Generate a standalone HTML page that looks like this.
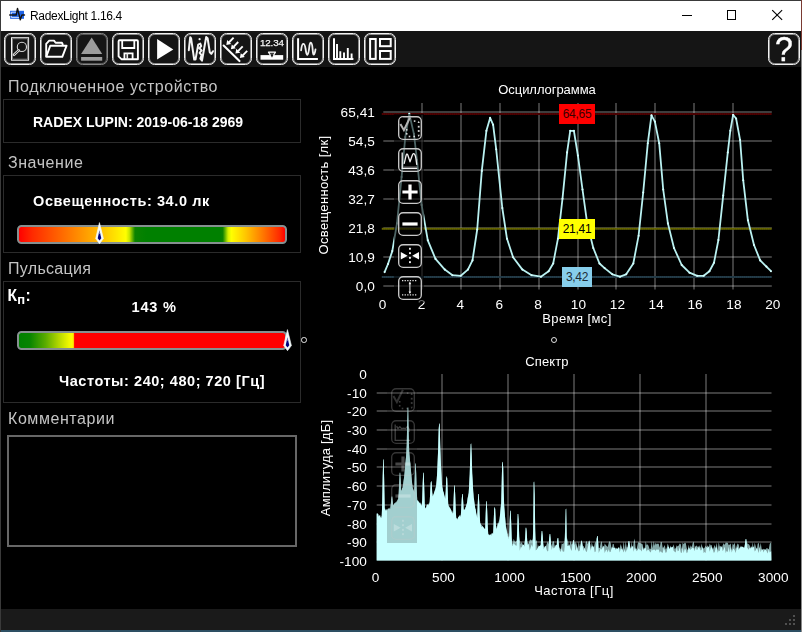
<!DOCTYPE html>
<html lang="ru">
<head>
<meta charset="utf-8">
<title>RadexLight 1.16.4</title>
<style>
html,body{margin:0;padding:0;}
body{width:802px;height:632px;overflow:hidden;background:#000;position:relative;font-family:"Liberation Sans",sans-serif;color:#fff;}
.abs{position:absolute;}
#win{position:absolute;left:0;top:0;width:802px;height:632px;background:#000;overflow:hidden;}
#titlebar{position:absolute;left:1px;top:1px;width:800px;height:30px;background:#fff;}
#title{position:absolute;left:30px;top:8.7px;font-size:12px;color:#000;letter-spacing:-0.32px;white-space:nowrap;line-height:14px;}
#toolbar{position:absolute;left:1px;top:31px;width:800px;height:36px;background:#151515;}
.tb{position:absolute;top:2px;width:30px;height:30px;border:1px solid #f2f2f2;border-radius:6.5px;box-shadow:inset 0 0 0 1px #8c8c8c;}
.tb svg{position:absolute;left:-1px;top:-1px;width:32px;height:32px;}
#status{position:absolute;left:1px;top:609px;width:800px;height:21px;background:#1a1a1a;}
#botstrip{position:absolute;left:0;top:630px;width:802px;height:2px;background:#2d4f63;}
.hd{position:absolute;left:8px;font-size:16px;letter-spacing:0.56px;color:#c4c4c4;white-space:nowrap;line-height:20px;}
.box{position:absolute;left:3px;width:296px;border:1px solid #2b2b2b;box-sizing:content-box;}
.bt{position:absolute;font-weight:700;color:#fff;white-space:nowrap;line-height:18px;}
.bar{position:absolute;left:17.2px;width:265.6px;height:15.1px;border:2px solid #869090;border-radius:4.5px;box-sizing:content-box;background-clip:padding-box;background-origin:padding-box;}
.tk{position:absolute;font-size:13.6px;color:#fff;white-space:nowrap;line-height:16px;letter-spacing:0.1px;}
.tk.r{text-align:right;}
.tk.c{text-align:center;}
.cl{position:absolute;font-size:13px;color:#fff;white-space:nowrap;line-height:16px;text-align:center;letter-spacing:0.1px;}
.mk{position:absolute;font-size:12px;line-height:20px;text-align:center;white-space:nowrap;letter-spacing:-0.3px;}
.cb{position:absolute;width:24px;height:24px;}
.cb svg{position:absolute;left:0;top:0;width:24px;height:24px;}
.hd,.bt,.tk,.cl,.mk,#title,.tb{will-change:opacity;}
</style>
</head>
<body>
<div id="win">
  <!-- title bar -->
  <div id="titlebar"></div>
  <svg class="abs" style="left:8px;top:6px" width="18" height="18" viewBox="0 0 18 18">
    <rect x="2.1" y="4.8" width="13.9" height="8" fill="#1f63e6"/>
    <path d="M3.3,11.4 L3.3,6.2 L8,6.2 M3.3,11.4 L12,11.4" fill="none" stroke="#e4edff" stroke-width="0.9"/>
    <polyline points="1.7,9 8.2,9 9.5,2.4 12.3,13.8 13.9,9 16.5,9" fill="none" stroke="#141414" stroke-width="1.4" stroke-linejoin="round" stroke-linecap="round"/>
  </svg>
  <div id="title">RadexLight 1.16.4</div>
  <svg class="abs" style="left:661px;top:1px" width="140" height="30" viewBox="0 0 141 30">
    <g stroke="#000" stroke-width="1" fill="none" shape-rendering="crispEdges">
      <line x1="21" y1="14.5" x2="31" y2="14.5"/>
      <rect x="66.5" y="9.5" width="9" height="9"/>
    </g>
    <g stroke="#000" stroke-width="1.1" fill="none">
      <line x1="112" y1="9" x2="122" y2="19"/><line x1="122" y1="9" x2="112" y2="19"/>
    </g>
  </svg>

  <!-- toolbar -->
  <div id="toolbar">
    <!--TBSTART-->
    <div class="tb" style="left:3px"><svg viewBox="0 0 32 32">
      <rect x="7.5" y="4.7" width="17.1" height="22.5" fill="none" stroke="#f2f2f2" stroke-width="1"/>
      <rect x="8.5" y="5.7" width="15.1" height="20.5" fill="none" stroke="#7d7d7d" stroke-width="1"/>
      <circle cx="17.9" cy="13.9" r="4.6" fill="none" stroke="#d8d8d8" stroke-width="1.1"/>
      <path d="M14.7,17.4 L10,21.8" stroke="#d8d8d8" stroke-width="2.6" stroke-linecap="round" fill="none"/>
      <path d="M14.5,17.6 L10.2,21.6" stroke="#151515" stroke-width="0.8" stroke-linecap="round" fill="none"/>
    </svg></div>
    <div class="tb" style="left:39px"><svg viewBox="0 0 32 32">
      <path d="M6.2,23.8 L6.2,10.8 L7.6,9.4 L9.2,7.6 L14,7.6 L15.6,9.8 L22,9.8 L23,12" fill="none" stroke="#fff" stroke-width="1.9" stroke-linejoin="round"/>
      <path d="M10.3,12.7 L26.6,12.7 L22.3,23.8 L6.2,23.8 Z" fill="none" stroke="#fff" stroke-width="1.9" stroke-linejoin="round"/>
    </svg></div>
    <div class="tb" style="left:75px;border-color:#8a8a8a;box-shadow:inset 0 0 0 1px #555"><svg viewBox="0 0 32 32">
      <path d="M15.7,4.5 L26.2,20.9 L5.1,20.9 Z" fill="#9c9c9c"/>
      <rect x="5.1" y="24" width="21.1" height="3.7" fill="#9c9c9c"/>
    </svg></div>
    <div class="tb" style="left:111px"><svg viewBox="0 0 32 32">
      <path d="M7.6,7.3 L25,7.3 Q25.9,7.3 25.9,8.2 L25.9,26.2 L9.4,26.2 L6.6,23.4 L6.6,8.2 Q6.6,7.3 7.6,7.3 Z" fill="none" stroke="#fff" stroke-width="1.9" stroke-linejoin="round"/>
      <path d="M10.2,7.3 L10.2,15 L22.3,15 L22.3,7.3" fill="none" stroke="#fff" stroke-width="1.8"/>
      <path d="M12.4,26.2 L12.4,20.4 L20.6,20.4 L20.6,26.2" fill="none" stroke="#fff" stroke-width="1.8"/>
      <path d="M15.3,20.4 L15.3,26.2" stroke="#e8e8e8" stroke-width="1.6"/>
    </svg></div>
    <div class="tb" style="left:147px"><svg viewBox="0 0 32 32">
      <path d="M9.1,6.1 L9.1,26.5 L25.3,16.4 Z" fill="#fff"/>
    </svg></div>
    <div class="tb" style="left:183px"><svg viewBox="0 0 32 32">
      <path d="M4.8,17.2 L6.2,4.2 L7.1,5.4 L10.2,26.6 L11.5,26.6 L14.2,11.6 L16.3,10.6 L17.2,13 L15.4,15.2 L17.6,17.4 L15.6,19.8 L17.6,22.2 L16.4,25.6 L18,27.6 L22.2,4 L23.6,5.2 L25.8,19.4 L27.3,20.9 L29,18.2" fill="none" stroke="#f4f4f4" stroke-width="2" stroke-linejoin="round" stroke-linecap="round"/>
      <circle cx="15.6" cy="6.2" r="1.1" fill="#f4f4f4"/>
    </svg></div>
    <div class="tb" style="left:219px"><svg viewBox="0 0 32 32">
      <path d="M3.6,12.5 L19.5,28.1" stroke="#fff" stroke-width="2.1" stroke-linecap="round" fill="none"/>
      <g id="arw"><path d="M13.6,4.7 L8.9,9.5" stroke="#fff" stroke-width="1.9" fill="none"/><path d="M6.3,11.9 L7.2,7.1 L11.2,11 Z" fill="#fff"/></g>
      <use href="#arw" x="4.6" y="4.3"/><use href="#arw" x="9.1" y="8.7"/><use href="#arw" x="13.6" y="13.1"/>
    </svg></div>
    <div class="tb" style="left:255px"><svg viewBox="0 0 32 32">
      <text x="15.9" y="13" font-family="Liberation Sans, sans-serif" font-size="9.8" font-weight="400" fill="#f4f4f4" stroke="#f4f4f4" stroke-width="0.25" text-anchor="middle" letter-spacing="-0.15">12.34</text>
      <rect x="4.5" y="22.1" width="22.7" height="4.6" fill="#fff"/>
      <path d="M12.4,19.1 L19.5,19.1 L16,24.8 Z" fill="#3a3a3a" stroke="#fff" stroke-width="1.1" stroke-linejoin="round"/>
      <path d="M14.6,22.1 L17.4,22.1 L16,24.6 Z" fill="#1a1a1a"/>
    </svg></div>
    <div class="tb" style="left:291px"><svg viewBox="0 0 32 32">
      <path d="M6.1,5.2 L6.1,26 L25.9,26" fill="none" stroke="#fff" stroke-width="2"/>
      <path d="M9.1,17.3 Q9.8,11 11.2,10.8 Q12.8,10.6 13.6,16 Q14.4,22 15.4,21.8 Q16.6,21 17.4,13 Q18,9.4 19,9.8 Q20.2,10.4 20.6,16 Q21,21.8 21.8,21.6 Q22.8,21 23.5,16.4" fill="none" stroke="#f0f0f0" stroke-width="1.8" stroke-linecap="round"/>
    </svg></div>
    <div class="tb" style="left:327px"><svg viewBox="0 0 32 32">
      <path d="M6,5.2 L6,26 L25.4,26" fill="none" stroke="#fff" stroke-width="2"/>
      <path d="M9,11 V26 M12.3,18.2 V26 M16,19.5 V26 M19.8,15.1 V26 M23.6,20.4 V26" stroke="#fff" stroke-width="1.9" fill="none"/>
    </svg></div>
    <div class="tb" style="left:363px"><svg viewBox="0 0 32 32">
      <rect x="6.1" y="6" width="5.6" height="19.9" fill="none" stroke="#fff" stroke-width="2"/>
      <rect x="16" y="6" width="10.7" height="7.2" fill="none" stroke="#fff" stroke-width="2"/>
      <rect x="16" y="18" width="10.7" height="7.9" fill="none" stroke="#fff" stroke-width="2"/>
    </svg></div>
    <div class="tb" style="left:767px"><div style="position:absolute;left:0;top:-3px;width:30px;text-align:center;font-size:32px;line-height:36px;color:#fff;transform:scaleY(1.1);-webkit-text-stroke:0.35px #fff">?</div></div>
    <!--TBEND-->
  </div>

  <!-- left panel -->
  <div class="hd" style="top:77px">Подключенное устройство</div>
  <div class="box" style="top:99px;height:42px"></div>
  <div class="bt" style="left:33px;top:113px;font-size:14px">RADEX LUPIN: 2019-06-18 2969</div>

  <div class="hd" style="top:153px">Значение</div>
  <div class="box" style="top:175px;height:76px"></div>
  <div class="bt" style="left:33px;top:192px;font-size:14.5px;letter-spacing:0.6px">Освещенность: 34.0 лк</div>
  <div class="bar" style="top:225px;background:linear-gradient(to right,#ff0000 0%,#ff2a00 5%,#ff7a00 19%,#ffb400 29%,#ffe800 37%,#ffff00 40.2%,#c8e600 41.5%,#0a8200 43.6%,#008000 48%,#008000 75.6%,#0a8200 76.6%,#d0f000 78.6%,#ffff00 79.8%,#ffc800 85%,#ff7a00 91.5%,#ff2a00 98%,#ff0000 100%)"></div>
  <svg class="abs" style="left:93.95px;top:221.2px" width="12" height="25" viewBox="0 0 12 25">
    <path d="M5.45,1.6 L9.4,17.6 L5.5,22.7 L1.7,17.6 Z" fill="#f4fbfb" stroke="#f4fbfb" stroke-width="0.6" stroke-linejoin="round"/><path d="M5.45,9.6 L7.3,17.2 L5.5,19.6 L3.7,17.2 Z" fill="#00007c"/><path d="M5.45,9 L6.4,13 L4.5,13 Z" fill="#8a96c8" opacity="0.7"/>
  </svg>

  <div class="hd" style="top:259px;letter-spacing:0.3px">Пульсация</div>
  <div class="box" style="top:281px;height:120px"></div>
  <div class="bt" style="left:7.4px;top:286.6px;font-size:15.6px;letter-spacing:0.3px">К<span style="font-size:13px;position:relative;top:3.2px">п</span>:</div>
  <div class="bt" style="left:131.6px;top:297.6px;font-size:14.6px;letter-spacing:0.75px">143 %</div>
  <div class="bar" style="top:331px;background:linear-gradient(to right,#008000 0%,#078400 4%,#5aac00 10%,#b4d800 15%,#f0f800 18.8%,#ffff00 20.0%,#ffd000 20.5%,#ff0000 20.9%,#ff0000 100%)"></div>
  <svg class="abs" style="left:281.55px;top:327.6px" width="12" height="25" viewBox="0 0 12 25">
    <path d="M5.45,1.6 L9.4,17.6 L5.5,22.7 L1.7,17.6 Z" fill="#f4fbfb" stroke="#f4fbfb" stroke-width="0.6" stroke-linejoin="round"/><path d="M5.45,9.6 L7.3,17.2 L5.5,19.6 L3.7,17.2 Z" fill="#00007c"/><path d="M5.45,9 L6.4,13 L4.5,13 Z" fill="#8a96c8" opacity="0.7"/>
  </svg>
  <div class="abs" style="left:301.1px;top:337.2px;width:3.6px;height:3.6px;border:1px solid #e6e6e6;border-radius:50%"></div>
  <div class="bt" style="left:59px;top:372px;font-size:14.5px;letter-spacing:0.55px">Частоты: 240; 480; 720 [Гц]</div>

  <div class="hd" style="top:409px">Комментарии</div>
  <div class="abs" style="left:7px;top:435px;width:286px;height:108px;border:2px solid #676767"></div>

  <!-- oscillogram -->
  <div class="cl" style="left:467px;top:82px;width:160px;letter-spacing:-0.05px">Осциллограмма</div>
  <svg class="abs" style="left:0;top:0" width="802" height="632" viewBox="0 0 802 632">
    <g stroke="#ffffff" stroke-opacity="0.245" stroke-width="2" fill="none"><line x1="422" y1="103" x2="422" y2="289.5"/><line x1="461" y1="103" x2="461" y2="289.5"/><line x1="500" y1="103" x2="500" y2="289.5"/><line x1="539" y1="103" x2="539" y2="289.5"/><line x1="578" y1="103" x2="578" y2="289.5"/><line x1="616" y1="103" x2="616" y2="289.5"/><line x1="655" y1="103" x2="655" y2="289.5"/><line x1="694" y1="103" x2="694" y2="289.5"/><line x1="733" y1="103" x2="733" y2="289.5"/><line x1="383.3" y1="286" x2="771.8" y2="286"/><line x1="383.3" y1="257" x2="771.8" y2="257"/><line x1="383.3" y1="228" x2="771.8" y2="228"/><line x1="383.3" y1="199" x2="771.8" y2="199"/><line x1="383.3" y1="170" x2="771.8" y2="170"/><line x1="383.3" y1="141" x2="771.8" y2="141"/><line x1="383.3" y1="112" x2="771.8" y2="112"/></g>
    <line x1="381.8" y1="114" x2="771.8" y2="114" stroke="#420000" stroke-width="2"/>
    <line x1="381.8" y1="114" x2="771.8" y2="114" stroke="#a00000" stroke-opacity="0.16" stroke-width="1.8" stroke-dasharray="1.1 0.9"/>
    <line x1="381.8" y1="228.8" x2="771.8" y2="228.8" stroke="#5e5e00" stroke-width="2"/>
    <line x1="381.8" y1="228.8" x2="771.8" y2="228.8" stroke="#a8a800" stroke-opacity="0.16" stroke-width="1.8" stroke-dasharray="1.1 0.9"/>
    <line x1="381.8" y1="276.9" x2="771.8" y2="276.9" stroke="#20343f" stroke-width="2"/>
    <line x1="381.8" y1="276.9" x2="771.8" y2="276.9" stroke="#3c7a98" stroke-opacity="0.16" stroke-width="1.8" stroke-dasharray="1.1 0.9"/>
    <polyline points="384.6,272.1 388.0,264.0 392.3,251.1 397.0,223.4 401.6,177.0 405.3,137.0 409.3,113.9 413.9,133.9 417.0,160.0 421.6,204.9 427.8,240.3 435.5,258.9 444.8,269.6 452.5,275.2 460.8,275.8 467.9,269.6 472.5,260.4 477.2,229.5 481.8,170.9 486.4,130.8 490.1,117.9 493.1,124.7 496.2,149.3 502.3,208.0 507.0,238.8 513.1,257.3 522.4,269.6 531.6,275.2 540.9,276.7 548.6,271.2 553.2,263.5 557.9,238.8 562.5,198.7 567.1,152.4 570.2,130.8 573.9,130.8 577.9,155.5 582.5,189.5 587.2,223.4 593.3,248.0 599.5,263.5 604.6,268.1 612.3,274.3 620.0,276.7 626.2,274.3 633.3,263.5 638.6,235.7 643.2,192.5 647.8,143.2 651.5,115.4 654.9,121.6 659.2,143.2 663.2,189.5 667.9,223.4 674.0,248.0 681.7,265.0 689.5,272.7 697.2,275.8 703.7,275.8 709.4,271.2 714.0,262.7 718.4,240.0 723.2,195.6 727.8,152.4 730.3,130.8 733.1,114.8 736.1,118.5 740.1,140.1 743.2,180.2 747.9,220.3 754.0,245.0 760.2,260.4 766.4,266.6 771.0,271.2" fill="none" stroke="#b9f1f1" stroke-width="1.8" stroke-linejoin="round"/>
    <g fill="#d6ffff"><circle cx="384.6" cy="272.1" r="1.05"/><circle cx="388.0" cy="264.0" r="1.05"/><circle cx="392.3" cy="251.1" r="1.05"/><circle cx="397.0" cy="223.4" r="1.05"/><circle cx="401.6" cy="177.0" r="1.05"/><circle cx="405.3" cy="137.0" r="1.05"/><circle cx="409.3" cy="113.9" r="1.05"/><circle cx="413.9" cy="133.9" r="1.05"/><circle cx="417.0" cy="160.0" r="1.05"/><circle cx="421.6" cy="204.9" r="1.05"/><circle cx="427.8" cy="240.3" r="1.05"/><circle cx="435.5" cy="258.9" r="1.05"/><circle cx="444.8" cy="269.6" r="1.05"/><circle cx="452.5" cy="275.2" r="1.05"/><circle cx="460.8" cy="275.8" r="1.05"/><circle cx="467.9" cy="269.6" r="1.05"/><circle cx="472.5" cy="260.4" r="1.05"/><circle cx="477.2" cy="229.5" r="1.05"/><circle cx="481.8" cy="170.9" r="1.05"/><circle cx="486.4" cy="130.8" r="1.05"/><circle cx="490.1" cy="117.9" r="1.05"/><circle cx="493.1" cy="124.7" r="1.05"/><circle cx="496.2" cy="149.3" r="1.05"/><circle cx="502.3" cy="208.0" r="1.05"/><circle cx="507.0" cy="238.8" r="1.05"/><circle cx="513.1" cy="257.3" r="1.05"/><circle cx="522.4" cy="269.6" r="1.05"/><circle cx="531.6" cy="275.2" r="1.05"/><circle cx="540.9" cy="276.7" r="1.05"/><circle cx="548.6" cy="271.2" r="1.05"/><circle cx="553.2" cy="263.5" r="1.05"/><circle cx="557.9" cy="238.8" r="1.05"/><circle cx="562.5" cy="198.7" r="1.05"/><circle cx="567.1" cy="152.4" r="1.05"/><circle cx="570.2" cy="130.8" r="1.05"/><circle cx="573.9" cy="130.8" r="1.05"/><circle cx="577.9" cy="155.5" r="1.05"/><circle cx="582.5" cy="189.5" r="1.05"/><circle cx="587.2" cy="223.4" r="1.05"/><circle cx="593.3" cy="248.0" r="1.05"/><circle cx="599.5" cy="263.5" r="1.05"/><circle cx="604.6" cy="268.1" r="1.05"/><circle cx="612.3" cy="274.3" r="1.05"/><circle cx="620.0" cy="276.7" r="1.05"/><circle cx="626.2" cy="274.3" r="1.05"/><circle cx="633.3" cy="263.5" r="1.05"/><circle cx="638.6" cy="235.7" r="1.05"/><circle cx="643.2" cy="192.5" r="1.05"/><circle cx="647.8" cy="143.2" r="1.05"/><circle cx="651.5" cy="115.4" r="1.05"/><circle cx="654.9" cy="121.6" r="1.05"/><circle cx="659.2" cy="143.2" r="1.05"/><circle cx="663.2" cy="189.5" r="1.05"/><circle cx="667.9" cy="223.4" r="1.05"/><circle cx="674.0" cy="248.0" r="1.05"/><circle cx="681.7" cy="265.0" r="1.05"/><circle cx="689.5" cy="272.7" r="1.05"/><circle cx="697.2" cy="275.8" r="1.05"/><circle cx="703.7" cy="275.8" r="1.05"/><circle cx="709.4" cy="271.2" r="1.05"/><circle cx="714.0" cy="262.7" r="1.05"/><circle cx="718.4" cy="240.0" r="1.05"/><circle cx="723.2" cy="195.6" r="1.05"/><circle cx="727.8" cy="152.4" r="1.05"/><circle cx="730.3" cy="130.8" r="1.05"/><circle cx="733.1" cy="114.8" r="1.05"/><circle cx="736.1" cy="118.5" r="1.05"/><circle cx="740.1" cy="140.1" r="1.05"/><circle cx="743.2" cy="180.2" r="1.05"/><circle cx="747.9" cy="220.3" r="1.05"/><circle cx="754.0" cy="245.0" r="1.05"/><circle cx="760.2" cy="260.4" r="1.05"/><circle cx="766.4" cy="266.6" r="1.05"/><circle cx="771.0" cy="271.2" r="1.05"/></g>
    <!-- spectrum -->
    <g stroke="#ffffff" stroke-opacity="0.245" stroke-width="2" fill="none"><line x1="442" y1="374" x2="442" y2="560.5"/><line x1="508" y1="374" x2="508" y2="560.5"/><line x1="574" y1="374" x2="574" y2="560.5"/><line x1="640" y1="374" x2="640" y2="560.5"/><line x1="706" y1="374" x2="706" y2="560.5"/><line x1="376.7" y1="393" x2="771.5" y2="393"/><line x1="376.7" y1="411" x2="771.5" y2="411"/><line x1="376.7" y1="430" x2="771.5" y2="430"/><line x1="376.7" y1="449" x2="771.5" y2="449"/><line x1="376.7" y1="467" x2="771.5" y2="467"/><line x1="376.7" y1="486" x2="771.5" y2="486"/><line x1="376.7" y1="505" x2="771.5" y2="505"/><line x1="376.7" y1="524" x2="771.5" y2="524"/><line x1="376.7" y1="542" x2="771.5" y2="542"/></g>
    <path d="M376.7,560.5 L376.7,514.0 L377.2,514.6 L377.7,516.1 L378.2,513.9 L378.7,517.0 L379.2,516.1 L379.7,516.6 L380.2,517.0 L380.7,517.7 L381.2,516.3 L381.7,516.6 L382.2,503.1 L382.7,475.9 L383.2,459.6 L383.7,459.6 L384.2,481.4 L384.7,508.5 L385.2,510.0 L385.7,510.6 L386.2,508.7 L386.7,510.7 L387.2,509.2 L387.7,509.2 L388.2,510.5 L388.7,507.7 L389.2,509.9 L389.7,509.6 L390.2,508.6 L390.7,505.2 L391.2,499.8 L391.7,496.6 L392.2,496.6 L392.7,500.9 L393.2,505.2 L393.7,505.4 L394.2,504.9 L394.7,504.8 L395.2,504.9 L395.7,502.3 L396.2,503.2 L396.7,501.0 L397.2,500.5 L397.7,499.4 L398.2,498.8 L398.7,492.9 L399.2,481.7 L399.7,472.8 L400.2,472.8 L400.7,479.5 L401.2,490.7 L401.7,490.2 L402.2,488.8 L402.7,487.5 L403.2,483.1 L403.7,480.1 L404.2,476.6 L404.7,471.3 L405.2,465.4 L405.7,460.1 L406.2,454.3 L406.7,444.9 L407.2,422.9 L407.7,407.4 L408.2,407.5 L408.7,434.2 L409.2,452.0 L409.7,457.2 L410.2,462.7 L410.7,468.2 L411.2,473.6 L411.7,478.9 L412.2,484.5 L412.7,487.4 L413.2,489.3 L413.7,490.4 L414.2,492.2 L414.7,476.2 L415.2,463.4 L415.7,463.4 L416.2,473.0 L416.7,489.1 L417.2,500.2 L417.7,500.2 L418.2,502.3 L418.7,502.9 L419.2,502.8 L419.7,502.5 L420.2,503.4 L420.7,504.4 L421.2,504.7 L421.7,505.8 L422.2,500.3 L422.7,483.1 L423.2,472.8 L423.7,472.8 L424.2,486.6 L424.7,503.8 L425.2,509.0 L425.7,507.6 L426.2,508.2 L426.7,506.1 L427.2,504.2 L427.7,504.8 L428.2,504.9 L428.7,505.4 L429.2,505.0 L429.7,502.7 L430.2,492.2 L430.7,482.7 L431.2,480.8 L431.7,482.7 L432.2,492.2 L432.7,496.2 L433.2,494.8 L433.7,494.1 L434.2,491.9 L434.7,491.5 L435.2,488.9 L435.7,488.3 L436.2,484.5 L436.7,479.1 L437.2,472.7 L437.7,460.1 L438.2,447.8 L438.7,428.3 L439.2,423.3 L439.7,424.1 L440.2,445.2 L440.7,458.4 L441.2,470.3 L441.7,479.4 L442.2,487.3 L442.7,489.3 L443.2,490.9 L443.7,493.4 L444.2,494.5 L444.7,497.2 L445.2,498.8 L445.7,491.7 L446.2,478.6 L446.7,476.0 L447.2,478.6 L447.7,491.7 L448.2,504.6 L448.7,506.9 L449.2,506.1 L449.7,509.3 L450.2,509.2 L450.7,508.5 L451.2,510.3 L451.7,511.7 L452.2,512.0 L452.7,513.5 L453.2,512.6 L453.7,497.6 L454.2,485.5 L454.7,485.5 L455.2,494.6 L455.7,509.6 L456.2,517.9 L456.7,519.5 L457.2,519.7 L457.7,518.8 L458.2,517.8 L458.7,516.6 L459.2,515.6 L459.7,518.1 L460.2,517.0 L460.7,517.0 L461.2,509.5 L461.7,499.8 L462.2,494.0 L462.7,494.0 L463.2,501.7 L463.7,510.1 L464.2,509.4 L464.7,509.9 L465.2,507.2 L465.7,507.2 L466.2,505.4 L466.7,504.0 L467.2,501.4 L467.7,497.8 L468.2,495.1 L468.7,493.1 L469.2,484.0 L469.7,474.8 L470.2,457.8 L470.7,444.3 L471.2,443.3 L471.7,455.9 L472.2,473.2 L472.7,482.4 L473.2,491.2 L473.7,497.6 L474.2,502.0 L474.7,504.9 L475.2,507.6 L475.7,511.4 L476.2,512.7 L476.7,514.9 L477.2,518.1 L477.7,504.7 L478.2,494.0 L478.7,494.0 L479.2,502.0 L479.7,515.4 L480.2,523.7 L480.7,524.7 L481.2,524.8 L481.7,524.7 L482.2,525.6 L482.7,527.9 L483.2,528.8 L483.7,528.4 L484.2,527.9 L484.7,530.8 L485.2,528.9 L485.7,513.6 L486.2,501.3 L486.7,501.3 L487.2,510.5 L487.7,525.8 L488.2,534.0 L488.7,534.9 L489.2,534.3 L489.7,534.9 L490.2,534.6 L490.7,535.8 L491.2,534.2 L491.7,534.3 L492.2,533.3 L492.7,533.2 L493.2,531.5 L493.7,521.3 L494.2,509.1 L494.7,506.7 L495.2,509.1 L495.7,521.3 L496.2,528.9 L496.7,525.9 L497.2,526.3 L497.7,524.5 L498.2,524.1 L498.7,521.5 L499.2,520.5 L499.7,519.0 L500.2,514.1 L500.7,508.4 L501.2,504.1 L501.7,482.1 L502.2,462.1 L502.7,461.7 L503.2,467.5 L503.7,493.0 L504.2,507.7 L504.7,514.3 L505.2,518.1 L505.7,523.5 L506.2,526.7 L506.7,529.3 L507.2,531.6 L507.7,534.2 L508.2,532.9 L508.7,537.0 L509.2,535.9 L509.7,520.2 L510.2,510.8 L510.7,510.8 L511.2,523.3 L511.7,537.6 L512.2,540.9 L512.7,544.3 L513.2,541.5 L513.7,538.7 L514.2,540.1 L514.7,541.5 L515.2,541.7 L515.7,541.7 L516.2,541.2 L516.7,540.6 L517.2,530.0 L517.7,514.0 L518.2,514.0 L518.7,520.4 L519.2,536.4 L519.7,539.8 L520.2,541.9 L520.7,544.1 L521.2,543.0 L521.7,541.9 L522.2,543.3 L522.7,544.7 L523.2,545.1 L523.7,545.5 L524.2,543.1 L524.7,540.7 L525.2,537.3 L525.7,527.7 L526.2,527.7 L526.7,531.5 L527.2,541.1 L527.7,543.4 L528.2,543.4 L528.7,543.4 L529.2,541.7 L529.7,540.0 L530.2,539.8 L530.7,539.5 L531.2,540.0 L531.7,540.5 L532.2,539.8 L532.7,539.2 L533.2,529.9 L533.7,482.4 L534.2,481.9 L534.7,495.2 L535.2,531.1 L535.7,542.0 L536.2,540.9 L536.7,539.8 L537.2,543.9 L537.7,548.0 L538.2,547.2 L538.7,546.4 L539.2,547.2 L539.7,548.1 L540.2,548.0 L540.7,545.0 L541.2,537.2 L541.7,531.0 L542.2,531.0 L542.7,535.7 L543.2,543.4 L543.7,546.3 L544.2,547.0 L544.7,547.7 L545.2,547.3 L545.7,547.0 L546.2,545.5 L546.7,544.1 L547.2,542.7 L547.7,541.4 L548.2,542.8 L548.7,544.3 L549.2,538.0 L549.7,534.0 L550.2,534.0 L550.7,539.3 L551.2,543.7 L551.7,546.2 L552.2,543.8 L552.7,541.4 L553.2,541.2 L553.7,541.0 L554.2,543.5 L554.7,546.0 L555.2,547.2 L555.7,548.4 L556.2,547.0 L556.7,544.9 L557.2,540.0 L557.7,538.0 L558.2,538.0 L558.7,542.9 L559.2,547.2 L559.7,547.9 L560.2,548.8 L560.7,549.6 L561.2,546.5 L561.7,543.4 L562.2,543.7 L562.7,544.0 L563.2,543.6 L563.7,543.2 L564.2,542.5 L564.7,537.0 L565.2,528.6 L565.7,509.3 L566.2,508.7 L566.7,536.1 L567.2,541.8 L567.7,538.0 L568.2,541.7 L568.7,545.3 L569.2,544.9 L569.7,544.4 L570.2,542.6 L570.7,540.8 L571.2,542.8 L571.7,544.8 L572.2,543.9 L572.7,542.9 L573.2,540.0 L573.7,540.0 L574.2,542.2 L574.7,545.3 L575.2,543.5 L575.7,541.7 L576.2,543.0 L576.7,544.4 L577.2,546.6 L577.7,548.8 L578.2,545.1 L578.7,541.4 L579.2,543.7 L579.7,546.0 L580.2,546.8 L580.7,543.7 L581.2,541.0 L581.7,539.7 L582.2,542.6 L582.7,545.5 L583.2,545.9 L583.7,546.3 L584.2,547.7 L584.7,549.1 L585.2,545.9 L585.7,542.6 L586.2,541.7 L586.7,540.7 L587.2,542.5 L587.7,544.2 L588.2,542.6 L588.7,541.0 L589.2,540.8 L589.7,540.6 L590.2,544.8 L590.7,549.4 L591.2,545.9 L591.7,542.4 L592.2,543.9 L592.7,545.4 L593.2,546.9 L593.7,548.4 L594.2,546.0 L594.7,543.6 L595.2,542.4 L595.7,541.2 L596.2,544.7 L596.7,538.5 L597.2,536.0 L597.7,536.0 L598.2,542.2 L598.7,547.9 L599.2,547.9 L599.7,547.9 L600.2,545.5 L600.7,543.0 L601.2,542.1 L601.7,541.1 L602.2,544.6 L602.7,548.0 L603.2,548.5 L603.7,548.9 L604.2,546.2 L604.7,543.4 L605.2,544.3 L605.7,545.1 L606.2,545.5 L606.7,545.9 L607.2,546.5 L607.7,547.0 L608.2,545.0 L608.7,543.0 L609.2,542.0 L609.7,541.1 L610.2,542.1 L610.7,543.2 L611.2,546.5 L611.7,549.9 L612.2,547.0 L612.7,544.0 L613.2,544.1 L613.7,544.1 L614.2,546.8 L614.7,549.6 L615.2,548.5 L615.7,547.5 L616.2,548.9 L616.7,550.3 L617.2,549.6 L617.7,548.9 L618.2,549.0 L618.7,549.1 L619.2,548.5 L619.7,547.8 L620.2,545.9 L620.7,543.9 L621.2,545.4 L621.7,546.9 L622.2,548.2 L622.7,549.6 L623.2,545.4 L623.7,541.2 L624.2,545.5 L624.7,549.8 L625.2,545.5 L625.7,541.2 L626.2,544.4 L626.7,547.6 L627.2,547.6 L627.7,547.1 L628.2,543.3 L628.7,541.0 L629.2,541.0 L629.7,544.0 L630.2,546.6 L630.7,548.8 L631.2,545.2 L631.7,541.6 L632.2,545.7 L632.7,549.7 L633.2,545.9 L633.7,542.0 L634.2,540.3 L634.7,538.5 L635.2,543.6 L635.7,548.7 L636.2,548.8 L636.7,548.8 L637.2,546.3 L637.7,543.7 L638.2,542.8 L638.7,541.9 L639.2,542.5 L639.7,543.0 L640.2,543.1 L640.7,543.3 L641.2,543.5 L641.7,543.7 L642.2,544.1 L642.7,544.5 L643.2,547.4 L643.7,550.2 L644.2,549.7 L644.7,549.1 L645.2,545.2 L645.7,541.3 L646.2,543.3 L646.7,545.2 L647.2,544.8 L647.7,544.3 L648.2,545.2 L648.7,546.2 L649.2,547.7 L649.7,549.2 L650.2,549.0 L650.7,548.8 L651.2,545.0 L651.7,541.1 L652.2,544.7 L652.7,548.3 L653.2,544.7 L653.7,541.1 L654.2,543.4 L654.7,545.7 L655.2,544.3 L655.7,542.8 L656.2,543.6 L656.7,544.4 L657.2,544.0 L657.7,543.5 L658.2,543.7 L658.7,543.8 L659.2,545.7 L659.7,547.7 L660.2,544.9 L660.7,542.1 L661.2,542.0 L661.7,541.8 L662.2,544.8 L662.7,547.7 L663.2,547.4 L663.7,547.1 L664.2,546.0 L664.7,544.9 L665.2,547.2 L665.7,549.6 L666.2,548.7 L666.7,547.9 L667.2,545.8 L667.7,543.6 L668.2,544.7 L668.7,545.9 L669.2,547.7 L669.7,549.5 L670.2,547.5 L670.7,545.5 L671.2,546.9 L671.7,548.3 L672.2,547.8 L672.7,547.3 L673.2,545.7 L673.7,544.2 L674.2,546.7 L674.7,549.1 L675.2,548.6 L675.7,548.2 L676.2,546.7 L676.7,545.3 L677.2,546.0 L677.7,546.6 L678.2,546.1 L678.7,545.5 L679.2,544.5 L679.7,543.4 L680.2,543.7 L680.7,544.0 L681.2,546.6 L681.7,549.2 L682.2,545.9 L682.7,542.6 L683.2,543.4 L683.7,544.2 L684.2,543.5 L684.7,542.7 L685.2,542.8 L685.7,542.9 L686.2,545.5 L686.7,548.1 L687.2,549.2 L687.7,550.3 L688.2,547.6 L688.7,544.8 L689.2,546.8 L689.7,548.7 L690.2,547.0 L690.7,545.3 L691.2,546.3 L691.7,547.2 L692.2,545.2 L692.7,543.1 L693.2,542.3 L693.7,541.5 L694.2,545.1 L694.7,548.7 L695.2,547.3 L695.7,545.9 L696.2,545.8 L696.7,545.6 L697.2,546.3 L697.7,546.9 L698.2,547.6 L698.7,548.2 L699.2,546.8 L699.7,545.3 L700.2,546.8 L700.7,548.3 L701.2,545.8 L701.7,543.4 L702.2,546.5 L702.7,549.6 L703.2,548.7 L703.7,547.9 L704.2,547.8 L704.7,547.7 L705.2,546.6 L705.7,545.5 L706.2,546.4 L706.7,547.2 L707.2,546.2 L707.7,545.2 L708.2,546.6 L708.7,548.0 L709.2,545.8 L709.7,543.6 L710.2,544.6 L710.7,545.5 L711.2,545.3 L711.7,545.1 L712.2,547.6 L712.7,550.1 L713.2,548.8 L713.7,547.4 L714.2,546.2 L714.7,544.9 L715.2,546.4 L715.7,547.9 L716.2,545.3 L716.7,542.8 L717.2,546.5 L717.7,550.2 L718.2,546.2 L718.7,542.2 L719.2,544.3 L719.7,546.4 L720.2,546.3 L720.7,546.1 L721.2,547.6 L721.7,549.1 L722.2,547.1 L722.7,545.2 L723.2,544.2 L723.7,543.3 L724.2,544.1 L724.7,545.0 L725.2,543.7 L725.7,542.4 L726.2,542.6 L726.7,542.8 L727.2,542.8 L727.7,542.8 L728.2,544.0 L728.7,545.3 L729.2,544.9 L729.7,544.6 L730.2,544.0 L730.7,543.4 L731.2,546.8 L731.7,550.2 L732.2,546.8 L732.7,543.4 L733.2,544.2 L733.7,545.0 L734.2,543.8 L734.7,542.5 L735.2,545.8 L735.7,549.0 L736.2,547.4 L736.7,545.8 L737.2,544.6 L737.7,543.4 L738.2,544.1 L738.7,544.7 L739.2,546.9 L739.7,549.1 L740.2,547.4 L740.7,545.8 L741.2,546.1 L741.7,546.5 L742.2,547.9 L742.7,549.2 L743.2,549.3 L743.7,549.4 L744.2,547.1 L744.7,544.9 L745.2,542.0 L745.7,539.0 L746.2,539.0 L746.7,541.4 L747.2,542.7 L747.7,544.0 L748.2,544.1 L748.7,544.2 L749.2,544.8 L749.7,545.4 L750.2,546.5 L750.7,547.6 L751.2,548.9 L751.7,550.2 L752.2,546.0 L752.7,541.9 L753.2,545.9 L753.7,550.0 L754.2,546.3 L754.7,542.7 L755.2,544.5 L755.7,546.3 L756.2,548.4 L756.7,550.4 L757.2,547.1 L757.7,543.7 L758.2,543.2 L758.7,542.7 L759.2,545.7 L759.7,548.7 L760.2,545.8 L760.7,542.8 L761.2,545.9 L761.7,548.9 L762.2,549.4 L762.7,549.8 L763.2,549.3 L763.7,548.8 L764.2,549.3 L764.7,549.9 L765.2,549.6 L765.7,549.4 L766.2,548.7 L766.7,548.0 L767.2,548.2 L767.7,548.4 L768.2,549.1 L768.7,549.8 L769.2,546.8 L769.7,543.9 L770.2,543.3 L770.7,542.7 L771.2,542.3 L771.4,560.5 Z" fill="#c8ffff" fill-opacity="0.66" stroke="none"/>
    <path d="M376.7,560.5 L376.7,513.5 L377.2,513.1 L377.7,513.8 L378.2,514.1 L378.7,516.7 L379.2,515.5 L379.7,515.3 L380.2,515.2 L380.7,517.7 L381.2,517.9 L381.7,517.4 L382.2,503.1 L382.7,475.9 L383.2,459.6 L383.7,459.6 L384.2,481.4 L384.7,508.5 L385.2,508.7 L385.7,510.7 L386.2,510.7 L386.7,509.4 L387.2,508.4 L387.7,510.7 L388.2,508.6 L388.7,508.7 L389.2,507.6 L389.7,508.8 L390.2,509.0 L390.7,505.2 L391.2,499.8 L391.7,496.6 L392.2,496.6 L392.7,500.9 L393.2,504.8 L393.7,505.3 L394.2,503.6 L394.7,503.1 L395.2,503.2 L395.7,502.1 L396.2,502.4 L396.7,501.4 L397.2,501.3 L397.7,499.8 L398.2,499.0 L398.7,492.9 L399.2,481.7 L399.7,472.8 L400.2,472.8 L400.7,479.5 L401.2,490.7 L401.7,490.3 L402.2,488.1 L402.7,487.6 L403.2,484.1 L403.7,480.0 L404.2,476.4 L404.7,471.6 L405.2,465.5 L405.7,460.4 L406.2,454.9 L406.7,445.7 L407.2,422.8 L407.7,407.7 L408.2,407.4 L408.7,434.3 L409.2,451.8 L409.7,457.3 L410.2,462.3 L410.7,467.5 L411.2,473.0 L411.7,478.7 L412.2,483.8 L412.7,488.1 L413.2,489.2 L413.7,490.6 L414.2,492.0 L414.7,476.2 L415.2,463.4 L415.7,463.4 L416.2,473.0 L416.7,489.1 L417.2,500.0 L417.7,500.8 L418.2,501.8 L418.7,500.6 L419.2,503.4 L419.7,502.5 L420.2,502.6 L420.7,503.9 L421.2,506.1 L421.7,505.1 L422.2,500.3 L422.7,483.1 L423.2,472.8 L423.7,472.8 L424.2,486.6 L424.7,503.8 L425.2,508.8 L425.7,507.8 L426.2,507.3 L426.7,504.9 L427.2,504.6 L427.7,504.4 L428.2,505.4 L428.7,503.4 L429.2,503.7 L429.7,501.2 L430.2,492.2 L430.7,482.7 L431.2,480.8 L431.7,482.7 L432.2,492.2 L432.7,496.5 L433.2,495.4 L433.7,493.9 L434.2,492.4 L434.7,490.4 L435.2,489.9 L435.7,487.5 L436.2,485.5 L436.7,480.2 L437.2,471.8 L437.7,460.4 L438.2,447.9 L438.7,429.3 L439.2,423.7 L439.7,423.5 L440.2,444.6 L440.7,458.5 L441.2,469.7 L441.7,480.0 L442.2,486.8 L442.7,489.1 L443.2,491.5 L443.7,492.4 L444.2,495.2 L444.7,496.7 L445.2,499.0 L445.7,491.7 L446.2,478.6 L446.7,476.0 L447.2,478.6 L447.7,491.7 L448.2,503.6 L448.7,506.1 L449.2,507.0 L449.7,507.6 L450.2,508.1 L450.7,509.5 L451.2,510.1 L451.7,512.6 L452.2,510.6 L452.7,513.8 L453.2,512.7 L453.7,497.6 L454.2,485.5 L454.7,485.5 L455.2,494.6 L455.7,509.6 L456.2,517.8 L456.7,518.2 L457.2,519.8 L457.7,518.2 L458.2,517.2 L458.7,517.0 L459.2,516.2 L459.7,515.2 L460.2,515.0 L460.7,517.1 L461.2,509.5 L461.7,499.8 L462.2,494.0 L462.7,494.0 L463.2,501.7 L463.7,509.7 L464.2,509.3 L464.7,510.1 L465.2,508.9 L465.7,507.6 L466.2,505.5 L466.7,504.1 L467.2,501.8 L467.7,498.1 L468.2,496.0 L468.7,492.9 L469.2,484.3 L469.7,474.7 L470.2,457.7 L470.7,444.0 L471.2,443.5 L471.7,454.9 L472.2,473.3 L472.7,481.5 L473.2,491.1 L473.7,497.6 L474.2,500.3 L474.7,504.7 L475.2,508.6 L475.7,509.3 L476.2,513.7 L476.7,515.6 L477.2,518.1 L477.7,504.7 L478.2,494.0 L478.7,494.0 L479.2,502.0 L479.7,515.4 L480.2,523.4 L480.7,523.2 L481.2,526.2 L481.7,527.2 L482.2,526.2 L482.7,526.0 L483.2,526.9 L483.7,527.3 L484.2,528.7 L484.7,528.5 L485.2,528.9 L485.7,513.6 L486.2,501.3 L486.7,501.3 L487.2,510.5 L487.7,525.8 L488.2,533.8 L488.7,534.7 L489.2,534.9 L489.7,535.4 L490.2,534.2 L490.7,534.4 L491.2,536.1 L491.7,532.9 L492.2,533.7 L492.7,533.6 L493.2,533.8 L493.7,521.3 L494.2,509.1 L494.7,506.7 L495.2,509.1 L495.7,521.3 L496.2,529.5 L496.7,528.1 L497.2,527.2 L497.7,523.5 L498.2,522.5 L498.7,523.7 L499.2,523.3 L499.7,517.4 L500.2,513.2 L500.7,506.8 L501.2,503.6 L501.7,482.9 L502.2,462.2 L502.7,462.2 L503.2,467.5 L503.7,492.4 L504.2,505.4 L504.7,511.7 L505.2,519.0 L505.7,525.6 L506.2,529.1 L506.7,531.0 L507.2,533.4 L507.7,536.4 L508.2,536.4 L508.7,538.9 L509.2,535.9 L509.7,520.2 L510.2,510.8 L510.7,510.8 L511.2,523.3 L511.7,539.0 L512.2,546.2 L512.7,545.6 L513.2,544.2 L513.7,542.9 L514.2,543.6 L514.7,544.4 L515.2,545.0 L515.7,545.5 L516.2,545.6 L516.7,545.7 L517.2,530.0 L517.7,514.0 L518.2,514.0 L518.7,520.4 L519.2,536.4 L519.7,550.8 L520.2,549.0 L520.7,547.1 L521.2,547.2 L521.7,547.4 L522.2,546.0 L522.7,544.6 L523.2,544.7 L523.7,544.8 L524.2,545.8 L524.7,546.7 L525.2,537.3 L525.7,527.7 L526.2,527.7 L526.7,531.5 L527.2,541.1 L527.7,545.0 L528.2,544.4 L528.7,543.9 L529.2,547.2 L529.7,550.6 L530.2,549.0 L530.7,547.4 L531.2,545.9 L531.7,544.4 L532.2,545.8 L532.7,547.2 L533.2,529.6 L533.7,482.1 L534.2,481.4 L534.7,495.0 L535.2,528.9 L535.7,550.4 L536.2,550.1 L536.7,549.7 L537.2,549.1 L537.7,548.5 L538.2,547.0 L538.7,545.4 L539.2,545.8 L539.7,546.2 L540.2,545.6 L540.7,544.9 L541.2,537.2 L541.7,531.0 L542.2,531.0 L542.7,535.7 L543.2,543.4 L543.7,549.6 L544.2,548.0 L544.7,546.4 L545.2,546.0 L545.7,545.7 L546.2,547.9 L546.7,550.1 L547.2,550.8 L547.7,551.5 L548.2,551.0 L548.7,544.6 L549.2,538.0 L549.7,534.0 L550.2,534.0 L550.7,539.3 L551.2,545.9 L551.7,550.0 L552.2,548.2 L552.7,546.3 L553.2,547.4 L553.7,548.5 L554.2,548.0 L554.7,547.4 L555.2,546.3 L555.7,545.1 L556.2,545.1 L556.7,544.9 L557.2,540.0 L557.7,538.0 L558.2,538.0 L558.7,542.9 L559.2,548.7 L559.7,550.3 L560.2,551.2 L560.7,552.0 L561.2,550.1 L561.7,548.1 L562.2,549.8 L562.7,551.5 L563.2,551.6 L563.7,551.7 L564.2,551.4 L564.7,546.4 L565.2,531.3 L565.7,509.5 L566.2,508.4 L566.7,536.1 L567.2,545.9 L567.7,545.9 L568.2,545.8 L568.7,545.7 L569.2,545.8 L569.7,545.8 L570.2,547.4 L570.7,549.0 L571.2,550.0 L571.7,551.1 L572.2,546.6 L572.7,542.9 L573.2,540.0 L573.7,540.0 L574.2,542.2 L574.7,545.8 L575.2,549.9 L575.7,550.5 L576.2,547.9 L576.7,545.3 L577.2,547.4 L577.7,549.6 L578.2,550.5 L578.7,551.5 L579.2,551.0 L579.7,550.6 L580.2,547.0 L580.7,543.7 L581.2,541.0 L581.7,541.0 L582.2,543.0 L582.7,546.2 L583.2,548.5 L583.7,550.8 L584.2,549.1 L584.7,547.5 L585.2,549.2 L585.7,551.0 L586.2,551.6 L586.7,552.3 L587.2,550.2 L587.7,548.1 L588.2,546.1 L588.7,542.8 L589.2,541.5 L589.7,541.5 L590.2,544.8 L590.7,550.7 L591.2,548.6 L591.7,546.6 L592.2,546.5 L592.7,546.3 L593.2,546.4 L593.7,546.5 L594.2,549.4 L594.7,552.2 L595.2,551.8 L595.7,551.5 L596.2,544.7 L596.7,538.5 L597.2,536.0 L597.7,536.0 L598.2,542.2 L598.7,552.9 L599.2,551.7 L599.7,550.6 L600.2,549.4 L600.7,548.3 L601.2,549.0 L601.7,549.8 L602.2,548.2 L602.7,546.7 L603.2,546.2 L603.7,545.8 L604.2,549.4 L604.7,552.9 L605.2,551.7 L605.7,550.5 L606.2,550.1 L606.7,549.6 L607.2,551.1 L607.7,552.6 L608.2,550.8 L608.7,548.9 L609.2,550.6 L609.7,552.2 L610.2,552.0 L610.7,551.8 L611.2,549.6 L611.7,547.3 L612.2,547.4 L612.7,547.6 L613.2,547.8 L613.7,547.9 L614.2,547.7 L614.7,547.5 L615.2,548.8 L615.7,550.1 L616.2,548.9 L616.7,547.7 L617.2,548.3 L617.7,548.9 L618.2,547.8 L618.7,546.7 L619.2,549.6 L619.7,552.5 L620.2,550.4 L620.7,548.4 L621.2,548.8 L621.7,549.2 L622.2,549.6 L622.7,550.1 L623.2,551.3 L623.7,552.5 L624.2,550.7 L624.7,548.9 L625.2,550.7 L625.7,552.6 L626.2,551.0 L626.7,549.5 L627.2,549.6 L627.7,547.1 L628.2,543.3 L628.7,541.0 L629.2,541.0 L629.7,544.0 L630.2,547.5 L630.7,549.0 L631.2,548.1 L631.7,547.1 L632.2,546.5 L632.7,545.8 L633.2,548.8 L633.7,551.7 L634.2,549.4 L634.7,547.1 L635.2,548.2 L635.7,549.3 L636.2,550.2 L636.7,551.2 L637.2,550.6 L637.7,549.9 L638.2,549.1 L638.7,548.2 L639.2,548.9 L639.7,549.7 L640.2,549.8 L640.7,549.9 L641.2,550.8 L641.7,551.6 L642.2,549.1 L642.7,546.6 L643.2,548.3 L643.7,550.0 L644.2,548.8 L644.7,547.7 L645.2,547.8 L645.7,547.9 L646.2,549.7 L646.7,551.6 L647.2,550.6 L647.7,549.6 L648.2,549.8 L648.7,550.0 L649.2,550.7 L649.7,551.5 L650.2,552.0 L650.7,552.6 L651.2,550.9 L651.7,549.1 L652.2,549.8 L652.7,550.4 L653.2,550.0 L653.7,549.6 L654.2,549.6 L654.7,549.7 L655.2,550.3 L655.7,551.0 L656.2,550.1 L656.7,549.2 L657.2,549.5 L657.7,549.8 L658.2,549.6 L658.7,549.4 L659.2,551.1 L659.7,552.8 L660.2,551.9 L660.7,551.1 L661.2,551.7 L661.7,552.4 L662.2,552.6 L662.7,552.9 L663.2,550.3 L663.7,547.8 L664.2,548.9 L664.7,550.0 L665.2,551.5 L665.7,552.9 L666.2,552.5 L666.7,552.1 L667.2,549.5 L667.7,546.9 L668.2,546.9 L668.7,546.8 L669.2,548.0 L669.7,549.2 L670.2,547.8 L670.7,546.4 L671.2,547.1 L671.7,547.7 L672.2,547.1 L672.7,546.5 L673.2,548.7 L673.7,550.9 L674.2,551.3 L674.7,551.7 L675.2,552.1 L675.7,552.6 L676.2,549.8 L676.7,547.1 L677.2,549.1 L677.7,551.2 L678.2,551.0 L678.7,550.8 L679.2,548.9 L679.7,547.0 L680.2,549.7 L680.7,552.5 L681.2,552.8 L681.7,553.1 L682.2,550.3 L682.7,547.6 L683.2,550.3 L683.7,553.0 L684.2,550.9 L684.7,548.9 L685.2,549.2 L685.7,549.6 L686.2,551.4 L686.7,553.3 L687.2,552.7 L687.7,552.1 L688.2,549.6 L688.7,547.2 L689.2,548.2 L689.7,549.2 L690.2,549.5 L690.7,549.8 L691.2,549.1 L691.7,548.5 L692.2,547.9 L692.7,547.4 L693.2,547.9 L693.7,548.3 L694.2,549.8 L694.7,551.3 L695.2,548.7 L695.7,546.1 L696.2,548.1 L696.7,550.1 L697.2,549.7 L697.7,549.2 L698.2,547.7 L698.7,546.1 L699.2,547.3 L699.7,548.4 L700.2,549.5 L700.7,550.6 L701.2,550.2 L701.7,549.8 L702.2,548.1 L702.7,546.5 L703.2,549.9 L703.7,553.3 L704.2,552.6 L704.7,551.8 L705.2,552.5 L705.7,553.2 L706.2,550.0 L706.7,546.8 L707.2,547.4 L707.7,548.0 L708.2,547.1 L708.7,546.3 L709.2,549.0 L709.7,551.8 L710.2,549.9 L710.7,548.0 L711.2,547.5 L711.7,547.0 L712.2,548.1 L712.7,549.2 L713.2,551.0 L713.7,552.8 L714.2,552.4 L714.7,552.1 L715.2,550.0 L715.7,548.0 L716.2,547.5 L716.7,547.1 L717.2,550.0 L717.7,552.8 L718.2,551.6 L718.7,550.3 L719.2,550.8 L719.7,551.2 L720.2,549.0 L720.7,546.7 L721.2,546.6 L721.7,546.5 L722.2,548.8 L722.7,551.2 L723.2,550.2 L723.7,549.2 L724.2,547.9 L724.7,546.6 L725.2,549.8 L725.7,553.0 L726.2,551.9 L726.7,550.8 L727.2,551.4 L727.7,552.0 L728.2,549.4 L728.7,546.7 L729.2,549.6 L729.7,552.4 L730.2,549.5 L730.7,546.6 L731.2,549.5 L731.7,552.5 L732.2,551.0 L732.7,549.4 L733.2,549.0 L733.7,548.6 L734.2,549.4 L734.7,550.2 L735.2,551.6 L735.7,553.0 L736.2,550.5 L736.7,548.1 L737.2,547.6 L737.7,547.1 L738.2,548.5 L738.7,550.0 L739.2,548.9 L739.7,547.9 L740.2,547.4 L740.7,546.9 L741.2,547.1 L741.7,547.3 L742.2,546.9 L742.7,546.5 L743.2,547.1 L743.7,547.6 L744.2,548.0 L744.7,546.9 L745.2,542.0 L745.7,539.0 L746.2,539.0 L746.7,543.0 L747.2,547.9 L747.7,548.3 L748.2,549.1 L748.7,549.8 L749.2,548.6 L749.7,547.5 L750.2,548.1 L750.7,548.7 L751.2,547.5 L751.7,546.3 L752.2,547.1 L752.7,548.0 L753.2,547.1 L753.7,546.3 L754.2,548.9 L754.7,551.6 L755.2,550.9 L755.7,550.2 L756.2,548.9 L756.7,547.6 L757.2,548.6 L757.7,549.7 L758.2,551.4 L758.7,553.1 L759.2,550.0 L759.7,547.0 L760.2,549.6 L760.7,552.2 L761.2,550.8 L761.7,549.4 L762.2,549.6 L762.7,549.8 L763.2,551.1 L763.7,552.4 L764.2,550.7 L764.7,549.1 L765.2,549.5 L765.7,549.9 L766.2,550.6 L766.7,551.3 L767.2,552.4 L767.7,553.5 L768.2,551.1 L768.7,548.7 L769.2,550.5 L769.7,552.4 L770.2,551.9 L770.7,551.4 L771.2,551.2 L771.4,560.5 Z" fill="#c8ffff" stroke="none"/>
  </svg>
  <div class="tk r" style="top:104.7px;left:319px;width:56px">65,41</div><div class="tk r" style="top:133.7px;left:319px;width:56px">54,5</div><div class="tk r" style="top:162.8px;left:319px;width:56px">43,6</div><div class="tk r" style="top:191.9px;left:319px;width:56px">32,7</div><div class="tk r" style="top:221.0px;left:319px;width:56px">21,8</div><div class="tk r" style="top:250.0px;left:319px;width:56px">10,9</div><div class="tk r" style="top:279.1px;left:319px;width:56px">0,0</div><div class="tk c" style="top:297px;left:362.7px;width:40px">0</div><div class="tk c" style="top:297px;left:401.6px;width:40px">2</div><div class="tk c" style="top:297px;left:440.4px;width:40px">4</div><div class="tk c" style="top:297px;left:479.3px;width:40px">6</div><div class="tk c" style="top:297px;left:518.1px;width:40px">8</div><div class="tk c" style="top:297px;left:558.5px;width:40px">10</div><div class="tk c" style="top:297px;left:597.4px;width:40px">12</div><div class="tk c" style="top:297px;left:636.2px;width:40px">14</div><div class="tk c" style="top:297px;left:675.1px;width:40px">16</div><div class="tk c" style="top:297px;left:713.9px;width:40px">18</div><div class="tk c" style="top:297px;left:752.8px;width:40px">20</div>
  <div class="cl" style="left:497px;top:311px;width:160px;letter-spacing:0.42px">Время [мс]</div>
  <div class="cl" style="left:244px;top:187px;width:160px;transform:rotate(-90deg);letter-spacing:0.33px">Освещенность [лк]</div>
  <div class="mk" style="left:559px;top:104px;width:36px;height:20px;background:#ff0000;color:#3c0000">64,65</div>
  <div class="mk" style="left:559px;top:219px;width:36px;height:20px;background:#ffff00;color:#000">21,41</div>
  <div class="mk" style="left:562px;top:267px;width:30px;height:20px;background:#87ceeb;color:#1c2a33">3,42</div>
  <div class="abs" style="left:393.7px;top:114px;width:30.5px;height:189.3px;background:rgba(0,0,0,0.58)"></div>
<div class="cb" style="left:398.0px;top:116.0px"><svg viewBox="0 0 24 24"><rect x="0.7" y="0.7" width="22.6" height="22.6" rx="4.4" fill="none" stroke="#c8c8c8" stroke-width="1.35"/><path d="M2.4,8 L5.9,14.2 L11.9,1.8" fill="none" stroke="#b4b4b4" stroke-width="2"/>
  <g fill="#d8d8d8"><path d="M19.6,7 L21.8,7 L20.7,4.8 Z"/><rect x="19.8" y="9.8" width="1.8" height="1.8"/><rect x="19.8" y="14.1" width="1.8" height="1.8"/><path d="M19.6,18.8 L21.8,18.8 L20.7,21 Z"/>
  <rect x="15.8" y="4.3" width="1.6" height="1.6"/><rect x="10.7" y="19.7" width="1.6" height="1.6"/><rect x="15.4" y="19.7" width="1.6" height="1.6"/><rect x="7.9" y="13" width="1.6" height="1.6"/><rect x="7.9" y="17" width="1.6" height="1.6"/></g></svg></div>
<div class="cb" style="left:398.0px;top:148.0px"><svg viewBox="0 0 24 24"><rect x="0.7" y="0.7" width="22.6" height="22.6" rx="4.4" fill="none" stroke="#c8c8c8" stroke-width="1.35"/><path d="M4.2,4.5 L4.2,20.3 L19.2,20.3" fill="none" stroke="#f0f0f0" stroke-width="1.3"/><path d="M5.3,19.1 L19.2,19.1" fill="none" stroke="#8a8a8a" stroke-width="1"/>
  <path d="M6.1,15.8 L8.2,7 Q8.9,4.6 9.8,7 L12,13.8 L14.4,7 Q15.4,4.6 16.8,6.6 Q17.6,8 17.9,10.5 L18.8,16.8" fill="none" stroke="#f0f0f0" stroke-width="1.3" stroke-linejoin="round"/></svg></div>
<div class="cb" style="left:398.0px;top:180.0px"><svg viewBox="0 0 24 24"><rect x="0.7" y="0.7" width="22.6" height="22.6" rx="4.4" fill="none" stroke="#c8c8c8" stroke-width="1.35"/><path d="M4.4,12 H19.6 M12,4.4 V19.6" stroke="#fff" stroke-width="3.2" fill="none"/></svg></div>
<div class="cb" style="left:398.0px;top:212.0px"><svg viewBox="0 0 24 24"><rect x="0.7" y="0.7" width="22.6" height="22.6" rx="4.4" fill="none" stroke="#c8c8c8" stroke-width="1.35"/><path d="M4.4,12 H19.6" stroke="#fff" stroke-width="3.2" fill="none"/></svg></div>
<div class="cb" style="left:398.0px;top:244.0px"><svg viewBox="0 0 24 24"><rect x="0.7" y="0.7" width="22.6" height="22.6" rx="4.4" fill="none" stroke="#c8c8c8" stroke-width="1.35"/><path d="M2.8,8 L2.8,15.6 L9.6,11.8 Z M21,8 L21,15.6 L14.2,11.8 Z" fill="#fff"/>
  <g fill="#f0f0f0"><rect x="11" y="3.8" width="1.9" height="1.9"/><rect x="11" y="8.2" width="1.9" height="1.9"/><rect x="11" y="12.9" width="1.9" height="1.9"/><rect x="11" y="17.2" width="1.9" height="1.9"/></g></svg></div>
<div class="cb" style="left:398.0px;top:276.0px"><svg viewBox="0 0 24 24"><rect x="0.7" y="0.7" width="22.6" height="22.6" rx="4.4" fill="none" stroke="#c8c8c8" stroke-width="1.35"/><path d="M4,4.6 H19.4 M4,18.9 H19.4" stroke="#e0e0e0" stroke-width="1.2" stroke-dasharray="1.3 1.3" fill="none"/>
  <path d="M11.9,6.5 V17" stroke="#f0f0f0" stroke-width="1" fill="none"/><path d="M10.6,8.2 L11.9,5.6 L13.2,8.2 Z M10.6,15.4 L11.9,18 L13.2,15.4 Z" fill="#f0f0f0"/></svg></div>


  <div class="abs" style="left:551px;top:337px;width:4px;height:4px;border:1px solid #e0e0e0;border-radius:50%"></div>

  <!-- spectrum labels -->
  <div class="cl" style="left:467px;top:354px;width:160px">Спектр</div>
  <div class="tk r" style="top:367px;left:319px;width:48px">0</div><div class="tk r" style="top:386px;left:319px;width:48px">-10</div><div class="tk r" style="top:404px;left:319px;width:48px">-20</div><div class="tk r" style="top:423px;left:319px;width:48px">-30</div><div class="tk r" style="top:442px;left:319px;width:48px">-40</div><div class="tk r" style="top:460px;left:319px;width:48px">-50</div><div class="tk r" style="top:479px;left:319px;width:48px">-60</div><div class="tk r" style="top:498px;left:319px;width:48px">-70</div><div class="tk r" style="top:517px;left:319px;width:48px">-80</div><div class="tk r" style="top:535px;left:319px;width:48px">-90</div><div class="tk r" style="top:554px;left:319px;width:48px">-100</div><div class="tk c" style="top:570px;left:350.5px;width:50px">0</div><div class="tk c" style="top:570px;left:418.5px;width:50px">500</div><div class="tk c" style="top:570px;left:484.6px;width:50px">1000</div><div class="tk c" style="top:570px;left:550.5px;width:50px">1500</div><div class="tk c" style="top:570px;left:616.4px;width:50px">2000</div><div class="tk c" style="top:570px;left:682.3px;width:50px">2500</div><div class="tk c" style="top:570px;left:748.3px;width:50px">3000</div>
  <div class="cl" style="left:494px;top:583px;width:160px;letter-spacing:0.52px">Частота [Гц]</div>
  <div class="cl" style="left:246px;top:460px;width:160px;transform:rotate(-90deg);letter-spacing:0.22px">Амплитуда [дБ]</div>
  <div class="abs" style="left:386.6px;top:384.8px;width:30.7px;height:158.2px;background:rgba(0,0,0,0.19)"></div>
<div style="opacity:0.27"><div class="cb" style="left:391.0px;top:387.9px"><svg viewBox="0 0 24 24"><rect x="0.7" y="0.7" width="22.6" height="22.6" rx="4.4" fill="none" stroke="#c8c8c8" stroke-width="1.35"/><path d="M2.4,8 L5.9,14.2 L11.9,1.8" fill="none" stroke="#b4b4b4" stroke-width="2"/>
  <g fill="#d8d8d8"><path d="M19.6,7 L21.8,7 L20.7,4.8 Z"/><rect x="19.8" y="9.8" width="1.8" height="1.8"/><rect x="19.8" y="14.1" width="1.8" height="1.8"/><path d="M19.6,18.8 L21.8,18.8 L20.7,21 Z"/>
  <rect x="15.8" y="4.3" width="1.6" height="1.6"/><rect x="10.7" y="19.7" width="1.6" height="1.6"/><rect x="15.4" y="19.7" width="1.6" height="1.6"/><rect x="7.9" y="13" width="1.6" height="1.6"/><rect x="7.9" y="17" width="1.6" height="1.6"/></g></svg></div>
<div class="cb" style="left:391.0px;top:419.9px"><svg viewBox="0 0 24 24"><rect x="0.7" y="0.7" width="22.6" height="22.6" rx="4.4" fill="none" stroke="#c8c8c8" stroke-width="1.35"/><path d="M4.2,4.5 L4.2,20.3 L19.2,20.3" fill="none" stroke="#f0f0f0" stroke-width="1.3"/>
  <path d="M5.6,6.2 L7,8.6 L8.8,6.6 L10.6,8.6 L12.6,8.2 L14.6,8.6 L16.4,6.4 L18,8.8 L18,12" fill="none" stroke="#f0f0f0" stroke-width="1.3" stroke-linejoin="round"/></svg></div>
<div class="cb" style="left:391.0px;top:451.9px"><svg viewBox="0 0 24 24"><rect x="0.7" y="0.7" width="22.6" height="22.6" rx="4.4" fill="none" stroke="#c8c8c8" stroke-width="1.35"/><path d="M4.4,12 H19.6 M12,4.4 V19.6" stroke="#fff" stroke-width="3.2" fill="none"/></svg></div>
<div class="cb" style="left:391.0px;top:483.9px"><svg viewBox="0 0 24 24"><rect x="0.7" y="0.7" width="22.6" height="22.6" rx="4.4" fill="none" stroke="#c8c8c8" stroke-width="1.35"/><path d="M4.4,12 H19.6" stroke="#fff" stroke-width="3.2" fill="none"/></svg></div>
<div class="cb" style="left:391.0px;top:515.9px"><svg viewBox="0 0 24 24"><rect x="0.7" y="0.7" width="22.6" height="22.6" rx="4.4" fill="none" stroke="#c8c8c8" stroke-width="1.35"/><path d="M2.8,8 L2.8,15.6 L9.6,11.8 Z M21,8 L21,15.6 L14.2,11.8 Z" fill="#fff"/>
  <g fill="#f0f0f0"><rect x="11" y="3.8" width="1.9" height="1.9"/><rect x="11" y="8.2" width="1.9" height="1.9"/><rect x="11" y="12.9" width="1.9" height="1.9"/><rect x="11" y="17.2" width="1.9" height="1.9"/></g></svg></div>
</div>

  <!-- status bar -->
  <div id="status">
    <svg class="abs" style="left:783px;top:5px" width="14" height="14" viewBox="0 0 14 14" shape-rendering="crispEdges">
      <g fill="#505050">
        <rect x="9" y="1" width="2" height="2"/>
        <rect x="5" y="5" width="2" height="2"/><rect x="9" y="5" width="2" height="2"/>
        <rect x="1" y="9" width="2" height="2"/><rect x="5" y="9" width="2" height="2"/><rect x="9" y="9" width="2" height="2"/>
      </g>
    </svg>
  </div>
  <div id="botstrip"></div>
  <!-- window edges -->
  <div class="abs" style="left:0;top:0;width:802px;height:1px;background:#3a3a3a"></div>
  <div class="abs" style="left:0;top:0;width:1px;height:632px;background:#3a3a3a"></div>
  <div class="abs" style="left:801px;top:0;width:1px;height:50px;background:#7a3a32"></div>
  <div class="abs" style="left:801px;top:50px;width:1px;height:582px;background:#8a8a8a"></div>
</div>
</body>
</html>
